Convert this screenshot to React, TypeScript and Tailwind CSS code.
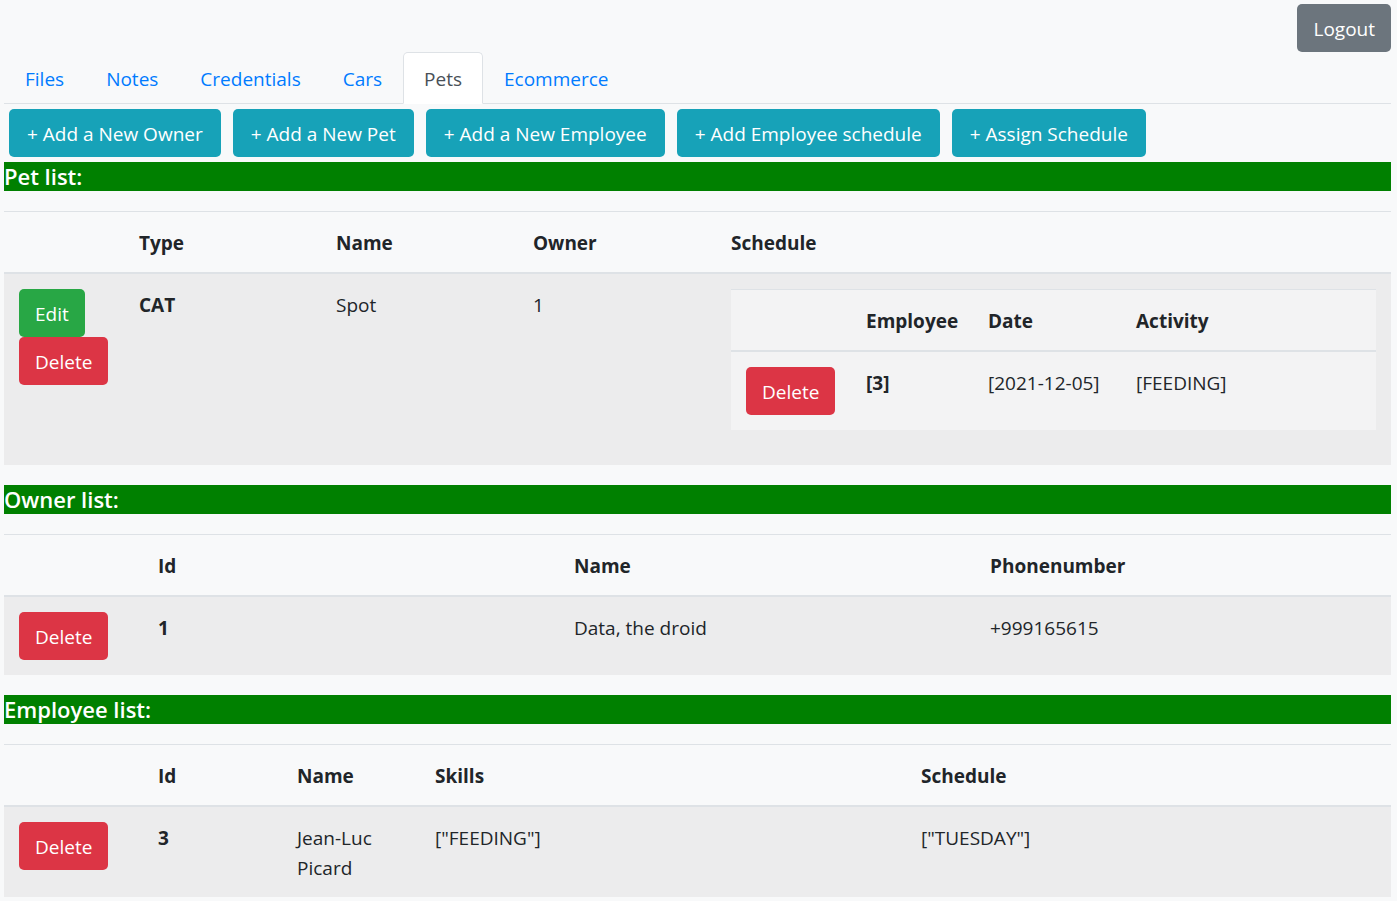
import React from 'react';

const tabs = ['Files', 'Notes', 'Credentials', 'Cars', 'Pets', 'Ecommerce'];

const actions = [
  '+ Add a New Owner',
  '+ Add a New Pet',
  '+ Add a New Employee',
  '+ Add Employee schedule',
  '+ Assign Schedule',
];

const Btn: React.FC<{ color: string; wide?: boolean; children: React.ReactNode }> = ({ color, wide, children }) => (
  <button
    className={`rounded-[5px] pt-[10px] pb-[8px] text-left text-white whitespace-nowrap ${
      wide ? 'px-[18px]' : 'px-[16px]'
    } ${color}`}
  >
    {children}
  </button>
);

const SectionBar: React.FC<{ title: string }> = ({ title }) => (
  <h4 className="h-[29px] bg-[#008000] text-[22px] font-semibold leading-[29px] text-white">{title}</h4>
);

const cell = 'px-[15px] pt-[16px] pb-[14px]';

const App: React.FC = () => {
  return (
    <div className="min-h-screen bg-[#f8f9fa] font-['Open_Sans',sans-serif] text-[19px] leading-[30px] text-[#212529]">
      <div className="pl-[4px] pr-[6px]">
        <div className="flex justify-end pt-[4px]">
          <button className="rounded-[5px] bg-[#6c757d] px-[16px] pt-[10px] pb-[8px] text-white">Logout</button>
        </div>

        <nav className="flex border-b border-[#dee2e6]">
          {tabs.map((t) =>
            t === 'Pets' ? (
              <span
                key={t}
                className="-mb-px rounded-t-[5px] border border-[#dee2e6] border-b-white bg-white px-[20px] pt-[11px] pb-[9px] text-[#495057]"
              >
                {t}
              </span>
            ) : (
              <a key={t} className="-mb-px border border-transparent px-[20px] pt-[11px] pb-[9px] text-[#007bff]">
                {t}
              </a>
            )
          )}
        </nav>

        <div className="flex gap-[12px] py-[5px] pl-[5px]">
          {actions.map((a) => (
            <Btn key={a} color="bg-[#17a2b8]" wide>
              {a}
            </Btn>
          ))}
        </div>

        {/* pets */}
        <SectionBar title="Pet list:" />
        <div className="my-[20px]">
          <div className="grid grid-cols-[120px_197px_197px_198px_1fr] border-t border-b-2 border-[#dee2e6] font-bold">
            <div className={cell} />
            <div className={cell}>Type</div>
            <div className={cell}>Name</div>
            <div className={cell}>Owner</div>
            <div className={cell}>Schedule</div>
          </div>
          <div className="grid grid-cols-[120px_197px_197px_198px_1fr] bg-[#ececed]">
            <div className="flex flex-col items-start p-[15px]">
              <Btn color="bg-[#28a745]">Edit</Btn>
              <Btn color="bg-[#dc3545]">Delete</Btn>
            </div>
            <div className={`${cell} font-bold`}>CAT</div>
            <div className={cell}>Spot</div>
            <div className={cell}>1</div>
            <div className="p-[15px]">
              <div className="mb-[20px] bg-[#f3f3f4]">
                <div className="grid grid-cols-[120px_122px_148px_1fr] border-t border-b-2 border-[#dee2e6] font-bold">
                  <div className={cell} />
                  <div className={cell}>Employee</div>
                  <div className={cell}>Date</div>
                  <div className={cell}>Activity</div>
                </div>
                <div className="grid grid-cols-[120px_122px_148px_1fr]">
                  <div className="p-[15px]">
                    <Btn color="bg-[#dc3545]">Delete</Btn>
                  </div>
                  <div className={`${cell} font-bold`}>[3]</div>
                  <div className={cell}>[2021-12-05]</div>
                  <div className={cell}>[FEEDING]</div>
                </div>
              </div>
            </div>
          </div>
        </div>

        {/* owners */}
        <SectionBar title="Owner list:" />
        <div className="my-[20px]">
          <div className="grid grid-cols-[139px_416px_416px_1fr] border-t border-b-2 border-[#dee2e6] font-bold">
            <div className={cell} />
            <div className={cell}>Id</div>
            <div className={cell}>Name</div>
            <div className={cell}>Phonenumber</div>
          </div>
          <div className="grid grid-cols-[139px_416px_416px_1fr] bg-[#ececed]">
            <div className="p-[15px]">
              <Btn color="bg-[#dc3545]">Delete</Btn>
            </div>
            <div className={`${cell} font-bold`}>1</div>
            <div className={cell}>Data, the droid</div>
            <div className={cell}>+999165615</div>
          </div>
        </div>

        {/* employees */}
        <SectionBar title="Employee list:" />
        <div className="my-[20px]">
          <div className="grid grid-cols-[139px_139px_138px_486px_1fr] border-t border-b-2 border-[#dee2e6] font-bold">
            <div className={cell} />
            <div className={cell}>Id</div>
            <div className={cell}>Name</div>
            <div className={cell}>Skills</div>
            <div className={cell}>Schedule</div>
          </div>
          <div className="grid grid-cols-[139px_139px_138px_486px_1fr] bg-[#ececed]">
            <div className="p-[15px]">
              <Btn color="bg-[#dc3545]">Delete</Btn>
            </div>
            <div className={`${cell} font-bold`}>3</div>
            <div className={cell}>Jean-Luc Picard</div>
            <div className={cell}>["FEEDING"]</div>
            <div className={cell}>["TUESDAY"]</div>
          </div>
        </div>
      </div>
    </div>
  );
};

export default App;
